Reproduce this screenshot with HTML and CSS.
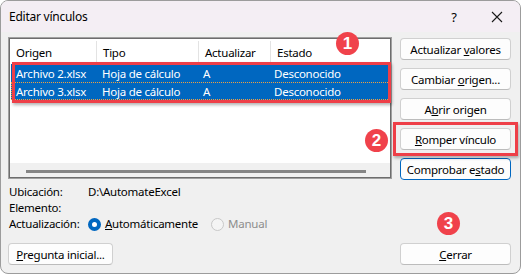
FILE: index.html
```html
<!DOCTYPE html>
<html lang="es">
<head>
    <meta charset="UTF-8">
    <title>Editar vínculos</title>
    <link rel="stylesheet" href="styles.css">
</head>
<body>

    <div class="dialog">
        <div class="titlebar">
            <span class="title">Editar vínculos</span>
            <span class="help">?</span>
            <span class="close">
                <svg width="12" height="12" viewBox="0 0 12 12"><path d="M1 1L11 11M11 1L1 11" stroke="#1a1a1a" stroke-width="1.1" fill="none"/></svg>
            </span>
        </div>

        <div class="main">
            <div class="links-list">
                <div class="list-inner">
                    <div class="row header">
                        <div class="cell c1">Origen</div>
                        <div class="cell c2">Tipo</div>
                        <div class="cell c3">Actualizar</div>
                        <div class="cell c4">Estado</div>
                    </div>
                    <div class="row selected">
                        <div class="cell c1">Archivo 2.xlsx</div>
                        <div class="cell c2">Hoja de cálculo</div>
                        <div class="cell c3">A</div>
                        <div class="cell c4">Desconocido</div>
                    </div>
                    <div class="row selected focused">
                        <div class="cell c1">Archivo 3.xlsx</div>
                        <div class="cell c2">Hoja de cálculo</div>
                        <div class="cell c3">A</div>
                        <div class="cell c4">Desconocido</div>
                    </div>
                    <div class="spacer"></div>
                    <div class="hscroll"><div class="thumb"></div></div>
                </div>
            </div>

            <div class="side-buttons">
                <button>Actualizar <u>v</u>alores</button>
                <button>Cambiar <u>o</u>rigen...</button>
                <button>A<u>b</u>rir origen</button>
                <button><u>R</u>omper vínculo</button>
                <button class="default">Comprobar e<u>s</u>tado</button>
            </div>
        </div>

        <div class="info">
            <div class="info-row"><span class="label">Ubicación:</span><span>D:\AutomateExcel</span></div>
            <div class="info-row"><span class="label">Elemento:</span></div>
            <div class="info-row">
                <span class="label">Actualización:</span>
                <span class="radio checked"></span><span class="radio-text"><u>A</u>utomáticamente</span>
                <span class="radio disabled"></span><span class="radio-text disabled-text">Manual</span>
            </div>
        </div>

        <div class="footer">
            <button class="wide-left"><u>P</u>regunta inicial...</button>
            <button class="close-btn"><u>C</u>errar</button>
        </div>

        <!-- callouts -->
        <div class="highlight rows-box"></div>
        <div class="highlight break-box"></div>
        <div class="badge b1">1</div>
        <div class="badge b2">2</div>
        <div class="badge b3">3</div>
    </div>

</body>
</html>
```

FILE: styles.css
```css
body {
    margin: 0;
    padding: 0;
    background-color: #ffffff;
    font-family: "Noto Sans", "Open Sans", sans-serif;
    font-size: 11.5px;
    letter-spacing: -0.25px;
    color: #000;
}

.dialog {
    position: relative;
    width: 519px;
    height: 272px;
    border: 1px solid #9c9c9c;
    border-radius: 8px;
    background-color: #f0f0f0;
    overflow: hidden;
    display: flex;
    flex-direction: column;
}

.titlebar {
    height: 31px;
    flex-shrink: 0;
    background-color: #f4eef4;
    display: flex;
    align-items: center;
    padding-left: 8px;
}

.title {
    flex: 1;
    font-size: 12px;
    margin-top: -1px;
}

.help {
    width: 14px;
    text-align: center;
    font-size: 13px;
    margin-right: 30px;
}

.close {
    width: 12px;
    height: 12px;
    margin-right: 17px;
    display: flex;
}

.main {
    display: flex;
    gap: 8px;
    padding: 5px 9px 0 7px;
}

.links-list {
    width: 382px;
    height: 140px;
    border: 1px solid #a0a0a0;
    background-color: #fff;
}

.list-inner {
    height: 138px;
    border: 1px solid #6d6d6d;
    display: flex;
    flex-direction: column;
    padding-left: 1px;
}

.row {
    display: flex;
    height: 18px;
    flex-shrink: 0;
    align-items: center;
    white-space: nowrap;
}

.row.header {
    height: 22px;
    margin-top: 2px;
    margin-bottom: 1px;
}

.cell {
    padding-left: 5px;
    height: 100%;
    display: flex;
    align-items: center;
}

.header .cell {
    border-right: 1px solid #e3e3e3;
}

.header .c4 {
    border-right: none;
}

.c1 { width: 80px; }
.c2 { width: 95px; padding-left: 6px; }
.c3 { width: 65px; padding-left: 6px; }
.c4 { flex: 1; padding-left: 6px; }

.row.selected {
    background-color: #0067c0;
    color: #fff;
}

.row.focused {
    outline: 1px dotted #f0a040;
    outline-offset: -1px;
}

.spacer {
    flex: 1;
}

.hscroll {
    height: 14px;
    background-color: #f0f0f0;
    margin-left: -1px;
    display: flex;
    align-items: center;
    padding-left: 16px;
}

.thumb {
    width: 340px;
    height: 3px;
    background-color: #858585;
    margin-top: 2px;
}

.side-buttons {
    display: flex;
    flex-direction: column;
    gap: 8px;
    padding-top: 1px;
}

button {
    font-family: "Noto Sans", "Open Sans", sans-serif;
    font-size: 11.5px;
    letter-spacing: -0.25px;
    color: #000;
    background-color: #fdfdfd;
    border: 1px solid #d0d0d0;
    border-bottom-color: #bcbcbc;
    border-radius: 4px;
    height: 22px;
    padding: 0;
    white-space: nowrap;
    cursor: pointer;
}

.side-buttons button {
    width: 111px;
}

button.default {
    border: 1px solid #0067c0;
}

.info {
    padding: 4px 0 0 8px;
    display: flex;
    flex-direction: column;
}

.info-row {
    height: 16px;
    line-height: 16px;
    flex-shrink: 0;
    display: flex;
    align-items: center;
}

.label {
    width: 79px;
}

.radio {
    width: 13px;
    height: 13px;
    flex-shrink: 0;
    border-radius: 50%;
    box-sizing: border-box;
    margin-right: 4px;
}

.radio.checked {
    background-color: #fff;
    border: 4px solid #0067c0;
}

.radio.disabled {
    border: 1px solid #c8c8c8;
    background-color: #f4f4f4;
    margin-left: 13px;
}

.disabled-text {
    color: #8d8d8d;
}

.footer {
    display: flex;
    justify-content: space-between;
    padding: 11px 9px 0 7px;
}

.wide-left {
    width: 105px;
}

.close-btn {
    width: 111px;
}

.highlight {
    position: absolute;
    border: 3px solid #ee3f48;
    box-shadow: 1px 2px 3px rgba(0, 0, 0, 0.3);
}

.rows-box {
    left: 11px;
    top: 61px;
    width: 373px;
    height: 35px;
}

.break-box {
    left: 392px;
    top: 121px;
    width: 119px;
    height: 28px;
}

.badge {
    position: absolute;
    width: 23px;
    height: 23px;
    border-radius: 50%;
    background-color: #f0424b;
    color: #fff;
    font-family: "Liberation Sans", Arial, sans-serif;
    font-weight: bold;
    font-size: 17px;
    letter-spacing: 0;
    display: flex;
    align-items: center;
    justify-content: center;
}

.b1 { left: 335px; top: 31px; }
.b2 { left: 364px; top: 128px; }
.b3 { left: 436px; top: 211px; }
```
